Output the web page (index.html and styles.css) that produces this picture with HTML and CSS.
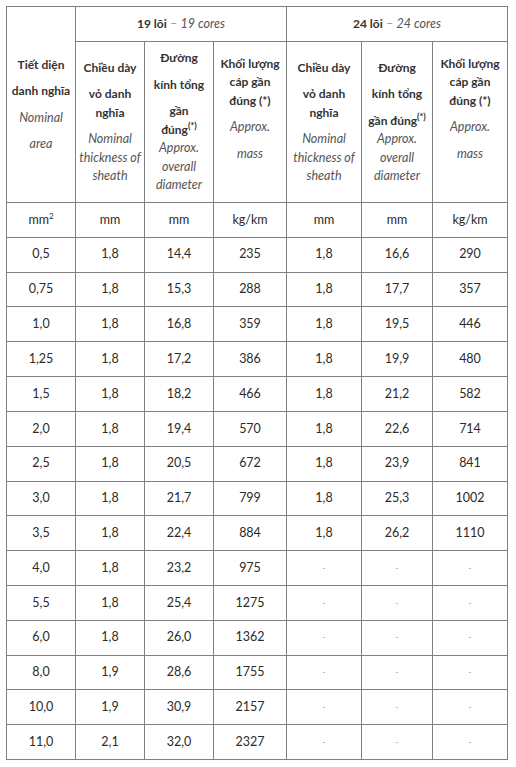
FILE: index.html
```html
<!DOCTYPE html>
<html lang="vi">
<head>
<meta charset="utf-8">
<link rel="stylesheet" href="styles.css">
</head>
<body>
<div class="tbl">
  <div class="c hd r2">
    <p class="b">Tiết diện</p>
    <p class="b">danh nghĩa</p>
    <p class="en">Nominal</p>
    <p class="en">area</p>
  </div>
  <div class="c grp"><span><b>19 lõi</b> <span class="dash">–</span> <i>19 cores</i></span></div>
  <div class="c grp"><span><b>24 lõi</b> <span class="dash">–</span> <i>24 cores</i></span></div>

  <div class="c hd">
    <p class="b">Chiều dày</p>
    <p class="b">vỏ danh<br>nghĩa</p>
    <p class="en">Nominal<br>thickness of<br>sheath</p>
  </div>
  <div class="c hd">
    <p class="b">Đường</p>
    <p class="b">kính tổng</p>
    <p class="b">gần<br>đúng<sup>(*)</sup></p>
    <p class="en tight">Approx.<br>overall<br>diameter</p>
  </div>
  <div class="c hd mass">
    <p class="b">Khối lượng<br>cáp gần<br>đúng (*)</p>
    <p class="en">Approx.</p>
    <p class="en">mass</p>
  </div>
  <div class="c hd">
    <p class="b">Chiều dày</p>
    <p class="b">vỏ danh<br>nghĩa</p>
    <p class="en">Nominal<br>thickness of<br>sheath</p>
  </div>
  <div class="c hd">
    <p class="b">Đường</p>
    <p class="b">kính tổng</p>
    <p class="b">gần đúng<sup>(*)</sup></p>
    <p class="en tight">Approx.<br>overall<br>diameter</p>
  </div>
  <div class="c hd mass">
    <p class="b">Khối lượng<br>cáp gần<br>đúng (*)</p>
    <p class="en">Approx.</p>
    <p class="en">mass</p>
  </div>

  <div class="c"><span>mm<sup class="sq">2</sup></span></div><div class="c">mm</div><div class="c">mm</div><div class="c">kg/km</div><div class="c">mm</div><div class="c">mm</div><div class="c">kg/km</div>

  <div class="c">0,5</div><div class="c">1,8</div><div class="c">14,4</div><div class="c">235</div><div class="c">1,8</div><div class="c">16,6</div><div class="c">290</div>
  <div class="c">0,75</div><div class="c">1,8</div><div class="c">15,3</div><div class="c">288</div><div class="c">1,8</div><div class="c">17,7</div><div class="c">357</div>
  <div class="c">1,0</div><div class="c">1,8</div><div class="c">16,8</div><div class="c">359</div><div class="c">1,8</div><div class="c">19,5</div><div class="c">446</div>
  <div class="c">1,25</div><div class="c">1,8</div><div class="c">17,2</div><div class="c">386</div><div class="c">1,8</div><div class="c">19,9</div><div class="c">480</div>
  <div class="c">1,5</div><div class="c">1,8</div><div class="c">18,2</div><div class="c">466</div><div class="c">1,8</div><div class="c">21,2</div><div class="c">582</div>
  <div class="c">2,0</div><div class="c">1,8</div><div class="c">19,4</div><div class="c">570</div><div class="c">1,8</div><div class="c">22,6</div><div class="c">714</div>
  <div class="c">2,5</div><div class="c">1,8</div><div class="c">20,5</div><div class="c">672</div><div class="c">1,8</div><div class="c">23,9</div><div class="c">841</div>
  <div class="c">3,0</div><div class="c">1,8</div><div class="c">21,7</div><div class="c">799</div><div class="c">1,8</div><div class="c">25,3</div><div class="c">1002</div>
  <div class="c">3,5</div><div class="c">1,8</div><div class="c">22,4</div><div class="c">884</div><div class="c">1,8</div><div class="c">26,2</div><div class="c">1110</div>
  <div class="c">4,0</div><div class="c">1,8</div><div class="c">23,2</div><div class="c">975</div><div class="c na">-</div><div class="c na">-</div><div class="c na">-</div>
  <div class="c">5,5</div><div class="c">1,8</div><div class="c">25,4</div><div class="c">1275</div><div class="c na">-</div><div class="c na">-</div><div class="c na">-</div>
  <div class="c">6,0</div><div class="c">1,8</div><div class="c">26,0</div><div class="c">1362</div><div class="c na">-</div><div class="c na">-</div><div class="c na">-</div>
  <div class="c">8,0</div><div class="c">1,9</div><div class="c">28,6</div><div class="c">1755</div><div class="c na">-</div><div class="c na">-</div><div class="c na">-</div>
  <div class="c">10,0</div><div class="c">1,9</div><div class="c">30,9</div><div class="c">2157</div><div class="c na">-</div><div class="c na">-</div><div class="c na">-</div>
  <div class="c">11,0</div><div class="c">2,1</div><div class="c">32,0</div><div class="c">2327</div><div class="c na">-</div><div class="c na">-</div><div class="c na">-</div>
</div>
</body>
</html>
```
FILE: styles.css
```css
html, body {
  margin: 0;
  background: #fff;
}
body {
  padding: 6px;
  font-family: "Lato", "Open Sans", sans-serif;
  font-size: 12.5px;
  color: #2b2b2b;
}
.tbl {
  display: grid;
  grid-template-columns: 69px 69px 69px 73px 75px 71px 75px;
  grid-template-rows: 35px 161px repeat(16, 34.8125px);
  width: 502px;
  border-top: 1px solid #808080;
  border-left: 1px solid #808080;
  box-sizing: border-box;
}
.c {
  box-sizing: border-box;
  border-right: 1px solid #808080;
  border-bottom: 1px solid #808080;
  display: flex;
  flex-direction: column;
  justify-content: center;
  align-items: center;
  text-align: center;
  line-height: 18.5px;
  min-width: 0;
  white-space: nowrap;
}
.r2 { grid-row: span 2; }
.grp {
  grid-column: span 3;
}
.grp b { font-weight: 700; font-size: 12px; color: #333; }
.grp i { color: #555; }
.dash { color: #999; }
.hd p {
  margin: 0;
}
.hd p + p { margin-top: 8px; }
.hd p.tight { margin-top: 0; }
.hd.mass { padding-bottom: 26px; }
.b { font-weight: 700; font-size: 12px; color: #333; }
.en { font-style: italic; color: #555; }
sup {
  font-size: 9px;
  line-height: 0;
  vertical-align: 5px;
}
.sq { font-size: 8px; vertical-align: 5px; }
.na { color: #aaa; font-size: 9px; }
```
